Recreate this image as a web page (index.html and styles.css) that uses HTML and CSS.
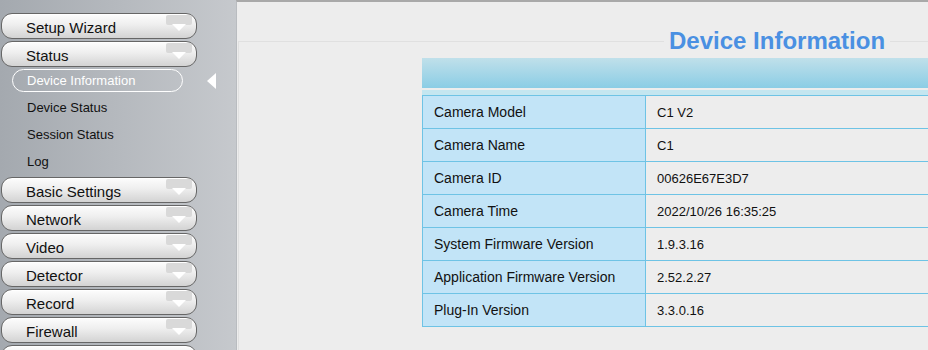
FILE: index.html
```html
<!DOCTYPE html>
<html lang="en">
<head>
  <meta charset="UTF-8">
  <meta name="viewport" content="width=device-width, initial-scale=1.0">
  <title>Device Information</title>
  <link rel="stylesheet" href="styles.css">
</head>
<body>
  <div class="page">
    <aside class="sidebar">
      <ul class="menu">
        <li><a class="menu-btn">Setup Wizard<svg class="caret" viewBox="0 0 26 17"><rect x="0" y="0" width="26" height="10" rx="2" fill="#d9d9d9"/><polygon points="6,9 20,9 13,16" fill="#fff"/></svg></a></li>
        <li>
          <a class="menu-btn">Status<svg class="caret" viewBox="0 0 26 17"><rect x="0" y="0" width="26" height="10" rx="2" fill="#d9d9d9"/><polygon points="6,9 20,9 13,16" fill="#fff"/></svg></a>
          <ul class="submenu">
            <li class="active"><span>Device Information</span></li>
            <li><span>Device Status</span></li>
            <li><span>Session Status</span></li>
            <li><span>Log</span></li>
          </ul>
        </li>
        <li><a class="menu-btn">Basic Settings<svg class="caret" viewBox="0 0 26 17"><rect x="0" y="0" width="26" height="10" rx="2" fill="#d9d9d9"/><polygon points="6,9 20,9 13,16" fill="#fff"/></svg></a></li>
        <li><a class="menu-btn">Network<svg class="caret" viewBox="0 0 26 17"><rect x="0" y="0" width="26" height="10" rx="2" fill="#d9d9d9"/><polygon points="6,9 20,9 13,16" fill="#fff"/></svg></a></li>
        <li><a class="menu-btn">Video<svg class="caret" viewBox="0 0 26 17"><rect x="0" y="0" width="26" height="10" rx="2" fill="#d9d9d9"/><polygon points="6,9 20,9 13,16" fill="#fff"/></svg></a></li>
        <li><a class="menu-btn">Detector<svg class="caret" viewBox="0 0 26 17"><rect x="0" y="0" width="26" height="10" rx="2" fill="#d9d9d9"/><polygon points="6,9 20,9 13,16" fill="#fff"/></svg></a></li>
        <li><a class="menu-btn">Record<svg class="caret" viewBox="0 0 26 17"><rect x="0" y="0" width="26" height="10" rx="2" fill="#d9d9d9"/><polygon points="6,9 20,9 13,16" fill="#fff"/></svg></a></li>
        <li><a class="menu-btn">Firewall<svg class="caret" viewBox="0 0 26 17"><rect x="0" y="0" width="26" height="10" rx="2" fill="#d9d9d9"/><polygon points="6,9 20,9 13,16" fill="#fff"/></svg></a></li>
        <li><a class="menu-btn menu-btn-cut"></a></li>
      </ul>
    </aside>

    <main class="content">
      <fieldset class="panel">
        <legend>Device Information</legend>
        <div class="info">
          <div class="info-head"></div>
          <div class="info-body">
            <table class="info-table">
              <tr><td class="label">Camera Model</td><td class="value">C1 V2</td></tr>
              <tr><td class="label">Camera Name</td><td class="value">C1</td></tr>
              <tr><td class="label">Camera ID</td><td class="value">00626E67E3D7</td></tr>
              <tr><td class="label">Camera Time</td><td class="value">2022/10/26 16:35:25</td></tr>
              <tr><td class="label">System Firmware Version</td><td class="value">1.9.3.16</td></tr>
              <tr><td class="label">Application Firmware Version</td><td class="value">2.52.2.27</td></tr>
              <tr><td class="label">Plug-In Version</td><td class="value">3.3.0.16</td></tr>
            </table>
          </div>
        </div>
      </fieldset>
    </main>
  </div>
</body>
</html>
```

FILE: styles.css
```css
body {
  margin: 0;
  padding: 0;
  font-family: "Liberation Sans", Arial, sans-serif;
  background-color: #ededed;
  overflow: hidden;
}
.page {
  display: flex;
  height: 350px;
  overflow: hidden;
}
.sidebar {
  width: 236px;
  flex-shrink: 0;
  background: linear-gradient(to right, #a4a9af, #c6c9cd);
  padding-top: 13px;
  box-sizing: border-box;
}
.menu, .submenu {
  list-style: none;
  margin: 0;
  padding: 0;
}
.menu-btn {
  display: flex;
  align-items: center;
  justify-content: space-between;
  width: 196px;
  height: 26px;
  margin: 0 0 2px 1px;
  padding: 2px 0 0 24px;
  box-sizing: border-box;
  border: 1px solid #666;
  border-radius: 11px;
  background: linear-gradient(#fdfdfd, #eeeeee 45%, #d3d3d3);
  box-shadow: inset 0 1px 0 #fff;
  font-size: 15px;
  color: #111;
}
.caret {
  align-self: flex-start;
  width: 26px;
  height: 17px;
  margin: -1px 4px 0 0;
}
.submenu {
  padding-bottom: 2px;
}
.submenu li {
  height: 27px;
  line-height: 27px;
  font-size: 13px;
  color: #111;
  padding-left: 27px;
}
.submenu li.active {
  position: relative;
  height: 25px;
  padding-left: 12px;
}
.submenu li.active span {
  display: block;
  width: 171px;
  height: 23px;
  line-height: 21px;
  box-sizing: border-box;
  padding-left: 14px;
  border: 1px solid #fff;
  border-radius: 12px;
  color: #fff;
}
.submenu li.active::after {
  content: "";
  position: absolute;
  left: 207px;
  top: 4px;
  border-style: solid;
  border-width: 8px 9px 8px 0;
  border-color: transparent #fff transparent transparent;
}
.content {
  flex: 1;
  border-top: 2px solid #a9a9a9;
  border-left: 1px solid #b9bcc0;
  overflow: hidden;
}
.panel {
  margin: 25px 0 0 1px;
  padding: 0 0 60px;
  border: 1px solid #e0e0e0;
  border-right: none;
  min-width: 0;
}
.panel legend {
  margin-left: 425px;
  padding: 0 5px;
  font-size: 24px;
  font-weight: bold;
  color: #4a90e2;
}
.info {
  margin: 3px 0 0 183px;
  width: 580px;
}
.info-head {
  height: 30px;
  background: linear-gradient(#c0e0ea, #8bcde5);
}
.info-body {
  margin-top: 2px;
  padding-top: 5px;
  background-color: #c4e6f0;
}
.info-table {
  width: 100%;
  border-collapse: collapse;
  font-size: 14px;
}
.info-table td {
  height: 32px;
  padding: 0 11px;
  border: 1px solid #6ec3e5;
}
.label {
  width: 200px;
  background-color: #c2e4f7;
  color: #111;
}
.value {
  background-color: #ededed;
  font-size: 13px;
  color: #111;
}
```
